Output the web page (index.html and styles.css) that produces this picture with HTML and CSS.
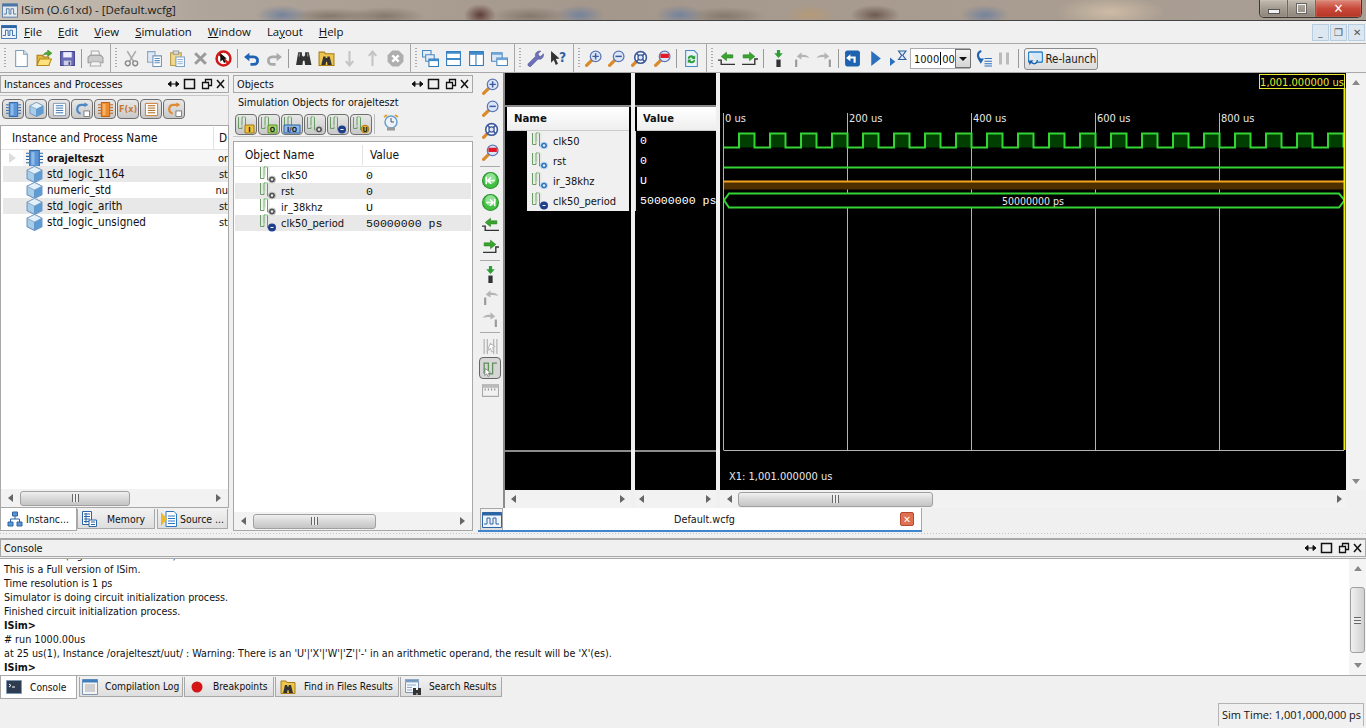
FILE: index.html
```html
<!DOCTYPE html>
<html lang="en">
  <head>
    <meta charset="UTF-8" />
    <title>ISim (O.61xd) - [Default.wcfg]</title>
    <link rel="stylesheet" href="styles.css">
  </head>
  <body>
    <svg class="defs" aria-hidden="true">
      <defs>
        <symbol id="i-new" viewBox="0 0 16 16"><path d="M2.500 .5h7.500l3.500 3.500v11.500h-11z" fill="#fff" stroke="#7b9ebd"/><path d="M10 .5v3.500h3.500" fill="#dbe8f3" stroke="#7b9ebd"/></symbol>
        <symbol id="i-open" viewBox="0 0 16 16"><path d="M1 5h5l1 1.500h5v8h-11z" fill="#e3b83a" stroke="#a97c14"/><path d="M1 14.500l2.500-6h11l-2.500 6z" fill="#fbe27e" stroke="#b58a1c"/><path d="M7 5c.5-2 2-3 4-3v-2l4 3-4 3v-2c-2 0-3 0-4 1z" fill="#4da82c" stroke="#2b7a14" stroke-width=".5"/></symbol>
        <symbol id="i-save" viewBox="0 0 16 16"><path d="M1.500 1.500h13v13h-13z" fill="#6a6db5" stroke="#44468a"/><path d="M4 2h8v5h-8z" fill="#eef"/><path d="M4.500 10h7v4.500h-7z" fill="#cfd0e8"/><path d="M9 11h1.500v3h-1.500z" fill="#44468a"/></symbol>
        <symbol id="i-print" viewBox="0 0 16 16"><path d="M4 1h7l1 4h-8z" fill="#f4f4f4" stroke="#aaa"/><path d="M1 7l2-2h10l2 2v5h-14z" fill="#ccc" stroke="#999"/><path d="M4 11h8l1 4h-10z" fill="#f4f4f4" stroke="#aaa"/></symbol>
        <symbol id="i-cut" viewBox="0 0 16 16"><path d="M4 1l6 10M12 1l-6 10" stroke="#aaa" stroke-width="1.500" fill="none"/><circle cx="4.500" cy="12.500" r="2.300" fill="none" stroke="#888" stroke-width="1.300"/><circle cx="11.500" cy="12.500" r="2.300" fill="none" stroke="#888" stroke-width="1.300"/></symbol>
        <symbol id="i-copy" viewBox="0 0 16 16"><path d="M1.500 1.500h7v10h-7z" fill="#dde8f4" stroke="#8aa6c4"/><path d="M6.500 5.500h8v10h-8z" fill="#fff" stroke="#6f93b8"/><path d="M8 8h5M8 10h5M8 12h5" stroke="#5f8fc0"/></symbol>
        <symbol id="i-paste" viewBox="0 0 16 16"><path d="M1.500 2.500h10v12h-10z" fill="#f0d98a" stroke="#b69a48"/><path d="M4 1h5v3h-5z" fill="#ddd" stroke="#999"/><path d="M6.500 6.500h8v9h-8z" fill="#fff" stroke="#7b9ebd"/><path d="M8 9h5M8 11h5M8 13h5" stroke="#8fb0d0"/></symbol>
        <symbol id="i-del" viewBox="0 0 16 16"><path d="M3 3l10 10M13 3l-10 10" stroke="#9a9a9a" stroke-width="2.800"/></symbol>
        <symbol id="i-noentry" viewBox="0 0 16 16"><circle cx="8" cy="8" r="6.500" fill="#fff" stroke="#d01818" stroke-width="2.400"/><path d="M3.500 3.500l9 9" stroke="#d01818" stroke-width="2"/><path d="M5 3l6 5-2.500.5 1.500 3-1.500.7-1.500-3-2 1.800z" fill="#111"/></symbol>
        <symbol id="i-undo" viewBox="0 0 16 16"><path d="M5 6.500h5c5 0 5 7 0 7h-3" fill="none" stroke="#1f63b5" stroke-width="2.600"/><path d="M1 6.500l5-4v8z" fill="#1f63b5"/></symbol>
        <symbol id="i-redo" viewBox="0 0 16 16"><path d="M11 6.500h-5c-5 0-5 7 0 7h3" fill="none" stroke="#aaa" stroke-width="2.600"/><path d="M15 6.500l-5-4v8z" fill="#aaa"/></symbol>
        <symbol id="i-binoc" viewBox="0 0 16 16"><path d="M3 2h3.500v3l1 1h1l1-1v-3h3.500l2.500 12h-6l-.5-4h-1.500l-.5 4h-6z" fill="#333"/><path d="M4 3v3M12 3v3" stroke="#999"/></symbol>
        <symbol id="i-findfolder" viewBox="0 0 16 16"><path d="M1 2h5l1 1.500h8v11h-14z" fill="#edc650" stroke="#a97c14"/><path d="M5 6h2.200v1.500h1.600v-1.500h2.200l2 8h-4l-.5-3h-.9l-.5 3h-4z" fill="#333"/></symbol>
        <symbol id="i-down" viewBox="0 0 16 16"><path d="M8 1v13M4.500 10.500l3.500 4 3.500-4" fill="none" stroke="#c4c4c4" stroke-width="2"/></symbol>
        <symbol id="i-up" viewBox="0 0 16 16"><path d="M8 15v-13M4.500 5.500l3.500-4 3.500 4" fill="none" stroke="#c4c4c4" stroke-width="2"/></symbol>
        <symbol id="i-stop" viewBox="0 0 16 16"><path d="M5 .5h6l4.500 4.500v6l-4.500 4.500h-6l-4.500-4.500v-6z" fill="#aeaeae"/><path d="M5 5l6 6M11 5l-6 6" stroke="#fff" stroke-width="2.200"/></symbol>
        <symbol id="i-casc" viewBox="0 0 16 16"><path d="M.5 .5h8v6h-8z" fill="#e4eef8" stroke="#4a88c0"/><path d="M3.500 4.500h8v6h-8z" fill="#e4eef8" stroke="#4a88c0"/><path d="M6.500 8.500h9v7h-9z" fill="#fff" stroke="#2f78ba"/><path d="M6.500 8.500h9v2h-9z" fill="#3f8acb"/></symbol>
        <symbol id="i-hsplit" viewBox="0 0 16 16"><path d="M1.500 1.500h13v13h-13z" fill="#fff" stroke="#2f78ba"/><path d="M1.500 1.500h13v2h-13zM1.500 7.500h13v2h-13z" fill="#3f8acb"/></symbol>
        <symbol id="i-vsplit" viewBox="0 0 16 16"><path d="M1.500 1.500h13v13h-13z" fill="#fff" stroke="#2f78ba"/><path d="M1.500 1.500h13v3h-13z" fill="#3f8acb"/><path d="M7.500 4v10" stroke="#2f78ba"/></symbol>
        <symbol id="i-wins" viewBox="0 0 16 16"><path d="M.5 2.500h10v8h-10z" fill="#d9e8f6" stroke="#4a88c0"/><path d="M.5 2.500h10v2h-10z" fill="#6ea5d6"/><path d="M5.500 7.500h10v7h-10z" fill="#fff" stroke="#4a88c0"/><path d="M5.500 7.500h10v2h-10z" fill="#6ea5d6"/></symbol>
        <symbol id="i-wrench" viewBox="0 0 16 16"><path d="M1 13l7-7c-.8-3 1.500-5.500 5-5l-2.500 2.500 .5 2 2 .5 2.500-2.500c.5 3.500-2 6-5 5l-7 7c-1 1-3.500-1-2.500-2.500z" fill="#6b70b8" stroke="#4a4e90" stroke-width=".5"/></symbol>
        <symbol id="i-help" viewBox="0 0 16 16"><path d="M1 1l8 7-3.500.5 2 4.500-2 1-2-4.500-2.500 2.500z" fill="#333"/><text x="8.500" y="11" class="svg-q">?</text></symbol>
        <symbol id="i-zin" viewBox="0 0 16 16"><path d="M1.500 14.500l5-5" stroke="#d98a2b" stroke-width="3" stroke-linecap="round"/><circle cx="10" cy="6" r="5" fill="#dbe6f8" stroke="#5d77b5" stroke-width="1.200"/><path d="M7 6h6M10 3v6" stroke="#3d5a9e" stroke-width="1.400"/></symbol>
        <symbol id="i-zout" viewBox="0 0 16 16"><path d="M1.500 14.500l5-5" stroke="#d98a2b" stroke-width="3" stroke-linecap="round"/><circle cx="10" cy="6" r="5" fill="#dbe6f8" stroke="#5d77b5" stroke-width="1.200"/><path d="M7 6h6" stroke="#3d5a9e" stroke-width="1.400"/></symbol>
        <symbol id="i-zfit" viewBox="0 0 16 16"><path d="M1.500 14.500l3-3" stroke="#d98a2b" stroke-width="3" stroke-linecap="round"/><circle cx="9" cy="7" r="5.500" fill="#fff" stroke="#3d5a9e" stroke-width="1.500"/><circle cx="9" cy="7" r="2.500" fill="#dbe6f8" stroke="#3d5a9e" stroke-width="1.200"/><path d="M5 3l2.500 2.500M13 3l-2.500 2.500M5 11l2.500-2.500M13 11l-2.500-2.500" stroke="#3d5a9e" stroke-width="1.500"/></symbol>
        <symbol id="i-zred" viewBox="0 0 16 16"><path d="M1.500 14.500l5-5" stroke="#d98a2b" stroke-width="3" stroke-linecap="round"/><circle cx="10" cy="6" r="5" fill="#dbe6f8" stroke="#5d77b5" stroke-width="1.200"/><path d="M6 3.500h8v4h-8z" fill="#e01828"/></symbol>
        <symbol id="i-refresh" viewBox="0 0 16 16"><path d="M2.500 .5h8l3 3v12h-11z" fill="#eaf3fb" stroke="#4a88c0"/><path d="M4.500 8c0-3 4-4 6-2l1-1v3.500h-3.500l1-1c-1-1-3-.5-3 1z" fill="#2f9d38"/><path d="M11.500 9.500c0 3-4 4-6 2l-1 1v-3.500h3.500l-1 1c1 1 3 .5 3-1z" fill="#2f9d38"/></symbol>
        <symbol id="i-gleft" viewBox="0 0 16 16"><circle cx="8" cy="8" r="7.500" fill="#43c043" stroke="#2c8f2c"/><circle cx="8" cy="6" r="5" fill="#8fe28f"/><path d="M12 8h-6M8.500 5l-3 3 3 3M4 4.500v7" fill="none" stroke="#fff" stroke-width="1.400"/></symbol>
        <symbol id="i-gright" viewBox="0 0 16 16"><circle cx="8" cy="8" r="7.500" fill="#43c043" stroke="#2c8f2c"/><circle cx="8" cy="6" r="5" fill="#8fe28f"/><path d="M4 8h6M7.500 5l3 3-3 3M12 4.500v7" fill="none" stroke="#fff" stroke-width="1.400"/></symbol>
        <symbol id="i-tleft" viewBox="0 0 16 16"><path d="M0 9.500h3v4h13" fill="none" stroke="#333" stroke-width="1.300"/><path d="M3 6l5-4v2.500h6v3h-6v2.500z" fill="#3aa52e" stroke="#1f7a1a" stroke-width=".5"/></symbol>
        <symbol id="i-tright" viewBox="0 0 16 16"><path d="M16 8.500h-3v5h-12" fill="none" stroke="#333" stroke-width="1.300"/><path d="M13 6l-5-4v2.500h-6v3h6v2.500z" fill="#3aa52e" stroke="#1f7a1a" stroke-width=".5"/></symbol>
        <symbol id="i-sdown" viewBox="0 0 16 16"><path d="M6.500 0h3v3h2.500l-4 4.500-4-4.500h2.500z" fill="#2f9d38"/><path d="M6 9h4v7h-4z" fill="#333"/></symbol>
        <symbol id="i-sback" viewBox="0 0 16 16"><path d="M2 9h2v7h-2z" fill="#999"/><path d="M3.500 6l4.500-4v2.500c3 0 6 .5 7.500 3-2-1-4-1-7.500-1v2.500z" fill="#b4b4b4"/></symbol>
        <symbol id="i-sfwd" viewBox="0 0 16 16"><path d="M12 9h2v7h-2z" fill="#999"/><path d="M12.500 6l-4.500-4v2.500c-3 0-6 .5-7.500 3 2-1 4-1 7.500-1v2.500z" fill="#b4b4b4"/></symbol>
        <symbol id="i-restart" viewBox="0 0 16 16"><path d="M1 2.500c0-1 1-2 2-2h10c1 0 2 1 2 2v11c0 1-1 2-2 2h-10c-1 0-2-1-2-2z" fill="#1d63b0"/><path d="M2 7.500l4-3.500v2h5v6h-2v-4h-3v2.500z" fill="#fff"/></symbol>
        <symbol id="i-play" viewBox="0 0 16 16"><path d="M4 1l9 7-9 7z" fill="#2a70bd"/></symbol>
        <symbol id="i-runfor" viewBox="0 0 16 16"><path d="M0 7l5 4-5 4z" fill="#2a70bd"/><path d="M8 1h7l-3 4 3 4h-7l3-4z" fill="#dfe9f5" stroke="#2a5f9e"/></symbol>
        <symbol id="i-wbreak" viewBox="0 0 16 16"><path d="M5 1c-4 1-4 6-1 8" fill="none" stroke="#1d63b0" stroke-width="2"/><path d="M1.500 8l6 0-3 5z" fill="#1d63b0"/><path d="M8 8h7M8 10.500h7M8 13h7M8 15h7" stroke="#2a70bd"/></symbol>
        <symbol id="i-pause" viewBox="0 0 16 16"><path d="M3 2h3v12h-3zM10 2h3v12h-3z" fill="#bbb"/></symbol>
        <symbol id="i-relaunch" viewBox="0 0 16 16"><path d="M2 1h12c1 0 1.500 .5 1.500 1.500v8c0 1-.5 1.500-1.500 1.500h-4" fill="#d5e8f8" stroke="#2f84c6" stroke-width="1.500"/><path d="M2 1c-1 0-1.500 .5-1.500 1.500v8c0 1 .5 1.500 1.500 1.500h3" fill="none" stroke="#2f84c6" stroke-width="1.500"/><path d="M10 9.500c0 4-3.500 5-6 3l-1.500-1" fill="none" stroke="#1d63b0" stroke-width="1.500"/><path d="M1 15v-5h5z" fill="#1d63b0" transform="rotate(-10 3 12)"/></symbol>

        <symbol id="i-chip" viewBox="0 0 16 16"><path d="M3.500 .5h9v15h-9z" fill="#5b95d6" stroke="#2c64a4"/><path d="M0 3h3M0 6h3M0 9h3M0 12h3M13 3h3M13 6h3M13 9h3M13 12h3" stroke="#2c64a4"/><path d="M5 2h3v12h-3z" fill="#8ebbe8"/></symbol>
        <symbol id="i-chipo" viewBox="0 0 16 16"><path d="M3.500 .5h9v15h-9z" fill="#ee8a2a" stroke="#b85d10"/><path d="M0 3h3M0 6h3M0 9h3M0 12h3M13 3h3M13 6h3M13 9h3M13 12h3" stroke="#b85d10"/><path d="M5 2h3v12h-3z" fill="#f8b36d"/></symbol>
        <symbol id="i-cube" viewBox="0 0 16 16"><path d="M8 .5l7 3.500v8l-7 3.500-7-3.500v-8z" fill="#a8cdeb" stroke="#6c93ba"/><path d="M1 4l7 3.500 7-3.500-7-3.500z" fill="#e4f1fb" stroke="#6c93ba" stroke-width=".6"/><path d="M8 7.500v8" stroke="#6c93ba"/><path d="M8 7.500l7-3.500v8l-7 3.500z" fill="#5e9dd3"/></symbol>
        <symbol id="i-list" viewBox="0 0 16 16"><path d="M1.500 1.500h13v13h-13z" fill="#fff" stroke="#7f98b2"/><path d="M4 4h8M4 6.500h8M4 9h8M4 11.500h8" stroke="#2c6fb0"/></symbol>
        <symbol id="i-listo" viewBox="0 0 16 16"><path d="M1.500 1.500h13v13h-13z" fill="#fff" stroke="#c97a2a"/><path d="M4 4h8M4 6.500h8M4 9h8M4 11.500h8" stroke="#a85f10"/></symbol>
        <symbol id="i-loop" viewBox="0 0 16 16"><path d="M13 3h-6c-6 0-6 9-1 9" fill="none" stroke="#4d88c4" stroke-width="2.400"/><path d="M10 .5l4 2.500-4 2.500z" fill="#4d88c4"/><path d="M9.500 9.500h6v6h-6z" fill="#fff" stroke="#777"/></symbol>
        <symbol id="i-loopo" viewBox="0 0 16 16"><path d="M13 3h-6c-6 0-6 9-1 9" fill="none" stroke="#e08a35" stroke-width="2.400"/><path d="M10 .5l4 2.500-4 2.500z" fill="#e08a35"/><path d="M9.500 9.500h6v6h-6z" fill="#fff" stroke="#777"/></symbol>

        <symbol id="i-sig" viewBox="0 0 18 18"><path d="M1.500 1v11.500h3.500v-11.500h3.500v13h3" fill="none" stroke="#6c9c66" stroke-width="1"/><path d="M3 1v9h3.500v-9h3.500v11" fill="none" stroke="#d6e8d2" stroke-width=".8"/></symbol>
        <symbol id="i-sigdot" viewBox="0 0 18 18"><use href="#i-sig"/><circle cx="13" cy="13.500" r="3.500" fill="#555" stroke="#ccc"/><circle cx="13" cy="13.500" r="1.200" fill="#eee"/></symbol>
        <symbol id="i-sigblue" viewBox="0 0 18 18"><use href="#i-sig"/><circle cx="13" cy="13.500" r="3.500" fill="#2f79c0" stroke="#cfe0f2"/><circle cx="13" cy="13.500" r="1.200" fill="#eef"/></symbol>
        <symbol id="i-sigconst" viewBox="0 0 18 18"><use href="#i-sig"/><circle cx="13" cy="13.500" r="4" fill="#1e3f8e"/><path d="M11.500 13.500h3" stroke="#fff"/></symbol>
        <symbol id="i-sigi" viewBox="0 0 18 18"><use href="#i-sig"/><path d="M8 9h9v8h-9z" fill="#f2c13e" stroke="#a07b12"/><text x="12.500" y="16" class="svg-badge">I</text></symbol>
        <symbol id="i-sigo" viewBox="0 0 18 18"><use href="#i-sig"/><path d="M8 9h9v8h-9z" fill="#a5d56a" stroke="#5e9428"/><text x="12.500" y="16" class="svg-badge">O</text></symbol>
        <symbol id="i-sigio" viewBox="0 0 18 18"><use href="#i-sig"/><path d="M1 9h16v8h-16z" fill="#8fbbe5" stroke="#2c64a4"/><text x="9" y="16" class="svg-badge">I/O</text></symbol>
        <symbol id="i-sigy" viewBox="0 0 18 18"><use href="#i-sig"/><circle cx="13" cy="13" r="3.800" fill="#e8a92c" stroke="#b07c10"/><text x="13" y="15.500" class="svg-badge">U</text></symbol>
        <symbol id="i-clock" viewBox="0 0 18 18"><circle cx="9" cy="8" r="6" fill="#eaf3fb" stroke="#6fa0cc" stroke-width="1.500"/><path d="M9 4v4h3" fill="none" stroke="#555"/><path d="M2 3l3-2M16 3l-3-2" stroke="#e0a030" stroke-width="2"/><path d="M5 15h8" stroke="#999" stroke-width="3"/></symbol>

        <symbol id="i-tree" viewBox="0 0 16 16"><path d="M5.500 1h5v4h-5z" fill="#5b95d6" stroke="#2c64a4"/><path d="M1 11h5v4h-5zM10 11h5v4h-5z" fill="#5b95d6" stroke="#2c64a4"/><path d="M8 5v3M3.500 11v-3h9v3" fill="none" stroke="#2c64a4"/></symbol>
        <symbol id="i-mem" viewBox="0 0 16 16"><path d="M1.500 .5h9v13h-9z" fill="#fff" stroke="#2c64a4"/><path d="M3 3h6M3 5.500h6M3 8h6M3 10.500h6M5 2v10" stroke="#2c64a4"/><path d="M8 9h7.500v6.500h-7.500z" fill="#fff" stroke="#2c64a4"/><path d="M10 11h4M10 13.500h4" stroke="#2c64a4"/></symbol>
        <symbol id="i-src" viewBox="0 0 16 16"><path d="M5 .5h8l2.500 2.500v12.500h-10.500z" fill="#fff" stroke="#2c78c0"/><path d="M7 5h7M7 7.500h7M7 10h7M7 12.500h7" stroke="#2c78c0"/><path d="M0 1l6 7-6 7z" fill="#f0b828"/></symbol>
        <symbol id="i-wave" viewBox="0 0 20 16"><path d="M.5 .5h19v15h-19z" fill="#eef4fb" stroke="#2c64a4"/><path d="M.5 .5h19v3h-19z" fill="#2c64a4"/><path d="M2 12h3v-6h3v6h3v-6h3v6h3" fill="none" stroke="#2c64a4"/></symbol>
        <symbol id="i-console" viewBox="0 0 16 16"><path d="M.5 1.500h15v13h-15z" fill="#2e3c52" stroke="#7f98b2"/><path d="M3 5l2 1.500-2 1.500M6 8h3" fill="none" stroke="#fff"/></symbol>
        <symbol id="i-log" viewBox="0 0 16 16"><path d="M.5 .5h15v15h-15z" fill="#f4f4f4" stroke="#7f98b2"/><path d="M.5 .5h15v3h-15z" fill="#3f7fbe"/><path d="M3 6h10M3 8h10M3 10h10M3 12h10" stroke="#aaa"/></symbol>
        <symbol id="i-redball" viewBox="0 0 16 16"><circle cx="8" cy="8" r="5.500" fill="#d51515"/></symbol>
        <symbol id="i-results" viewBox="0 0 16 16"><path d="M.5 .5h13v13h-13z" fill="#f4f7fb" stroke="#7f98b2"/><path d="M.5 .5h13v2.500h-13zM2 6h9M2 8.500h5M2 11h5" fill="#6f97c0" stroke="#8fa9c4"/><path d="M8 9h3v2h2v-2h3v7h-3.500v-2h-1v2h-3.500z" fill="#333"/></symbol>
        <symbol id="i-app" viewBox="0 0 18 16"><path d="M.5 .5h17v15h-17z" fill="#eef4fb" stroke="#2c64a4"/><path d="M.5 .5h17v3h-17z" fill="#2c64a4"/><path d="M2 12h3v-6h3v6h2v-6h3v6h3" fill="none" stroke="#2c64a4"/></symbol>
        <symbol id="i-pin" viewBox="0 0 58 12"><path d="M1 6h11M1 6l3-2.500v5zM12 6l-3-2.500v5z" fill="#111" stroke="#111"/><path d="M17.500 1.500h10v9h-10z" fill="none" stroke="#111" stroke-width="1.500"/><path d="M35.500 4.500h6v6h-6zM38.500 4.500v-3h6v6h-3" fill="none" stroke="#111" stroke-width="1.300"/><path d="M50 2l7 8M57 2l-7 8" stroke="#111" stroke-width="1.500"/></symbol>
      </defs>
    </svg>

    <div class="app">
      <header class="titlebar">
        <svg class="title-icon"><use href="#i-app"/></svg>
        <span class="title-text">ISim (O.61xd) - [Default.wcfg]</span>
        <div class="winbtns">
          <div class="winbtn winbtn-min"><span class="min-bar"></span></div>
          <div class="winbtn winbtn-max"><span class="max-box"></span></div>
          <div class="winbtn winbtn-close">✕</div>
        </div>
      </header>

      <nav class="menubar">
        <svg class="menu-icon"><use href="#i-app"/></svg>
        <span class="menu-item m-file"><u>F</u>ile</span>
        <span class="menu-item"><u>E</u>dit</span>
        <span class="menu-item"><u>V</u>iew</span>
        <span class="menu-item"><u>S</u>imulation</span>
        <span class="menu-item"><u>W</u>indow</span>
        <span class="menu-item">La<u>y</u>out</span>
        <span class="menu-item"><u>H</u>elp</span>
        <div class="docbtns">
          <span class="docbtn">_</span>
          <span class="docbtn">❐</span>
          <span class="docbtn">✕</span>
        </div>
      </nav>

      <div class="toolbar">
        <div class="tgroup tgroup-first">
          <span class="tb"><svg><use href="#i-new"/></svg></span>
          <span class="tb"><svg><use href="#i-open"/></svg></span>
          <span class="tb"><svg><use href="#i-save"/></svg></span>
          <span class="tsep"></span>
          <span class="tb"><svg><use href="#i-print"/></svg></span>
        </div>
        <div class="tgroup">
          <span class="tb"><svg><use href="#i-cut"/></svg></span>
          <span class="tb"><svg><use href="#i-copy"/></svg></span>
          <span class="tb"><svg><use href="#i-paste"/></svg></span>
          <span class="tb"><svg><use href="#i-del"/></svg></span>
          <span class="tb"><svg><use href="#i-noentry"/></svg></span>
          <span class="tsep"></span>
          <span class="tb"><svg><use href="#i-undo"/></svg></span>
          <span class="tb"><svg><use href="#i-redo"/></svg></span>
          <span class="tsep"></span>
          <span class="tb"><svg><use href="#i-binoc"/></svg></span>
          <span class="tb"><svg><use href="#i-findfolder"/></svg></span>
          <span class="tb"><svg><use href="#i-down"/></svg></span>
          <span class="tb"><svg><use href="#i-up"/></svg></span>
          <span class="tb"><svg><use href="#i-stop"/></svg></span>
        </div>
        <div class="tgroup">
          <span class="tb"><svg><use href="#i-casc"/></svg></span>
          <span class="tb"><svg><use href="#i-hsplit"/></svg></span>
          <span class="tb"><svg><use href="#i-vsplit"/></svg></span>
          <span class="tb"><svg><use href="#i-wins"/></svg></span>
        </div>
        <div class="tgroup">
          <span class="tb"><svg><use href="#i-wrench"/></svg></span>
          <span class="tb"><svg><use href="#i-help"/></svg></span>
        </div>
        <div class="tgroup">
          <span class="tb"><svg><use href="#i-zin"/></svg></span>
          <span class="tb"><svg><use href="#i-zout"/></svg></span>
          <span class="tb"><svg><use href="#i-zfit"/></svg></span>
          <span class="tb"><svg><use href="#i-zred"/></svg></span>
          <span class="tsep"></span>
          <span class="tb"><svg><use href="#i-refresh"/></svg></span>
        </div>
        <div class="tgroup tgroup-last">
          <span class="tb"><svg><use href="#i-tleft"/></svg></span>
          <span class="tb"><svg><use href="#i-tright"/></svg></span>
          <span class="tsep"></span>
          <span class="tb"><svg><use href="#i-sdown"/></svg></span>
          <span class="tb"><svg><use href="#i-sback"/></svg></span>
          <span class="tb"><svg><use href="#i-sfwd"/></svg></span>
          <span class="tsep"></span>
          <span class="tb"><svg><use href="#i-restart"/></svg></span>
          <span class="tb"><svg><use href="#i-play"/></svg></span>
          <span class="tb"><svg><use href="#i-runfor"/></svg></span>
          <div class="timebox">
            <span class="timebox-text">1000<span class="caret"></span>00</span>
            <span class="timebox-drop"></span>
          </div>
          <span class="tb"><svg><use href="#i-wbreak"/></svg></span>
          <span class="tb tb-narrow"><svg><use href="#i-pause"/></svg></span>
          <span class="tsep"></span>
          <div class="relaunch"><svg><use href="#i-relaunch"/></svg>Re-launch</div>
        </div>
      </div>

      <main class="main">
        <section class="leftpane">
          <div class="panel-head">Instances and Processes<svg class="pin"><use href="#i-pin"/></svg></div>
          <div class="icon-strip">
            <span class="toggle"><svg><use href="#i-chip"/></svg></span>
            <span class="toggle"><svg><use href="#i-cube"/></svg></span>
            <span class="toggle"><svg><use href="#i-list"/></svg></span>
            <span class="toggle"><svg><use href="#i-loop"/></svg></span>
            <span class="toggle"><svg><use href="#i-chipo"/></svg></span>
            <span class="toggle toggle-fx">F(x)</span>
            <span class="toggle"><svg><use href="#i-listo"/></svg></span>
            <span class="toggle"><svg><use href="#i-loopo"/></svg></span>
          </div>
          <div class="tree-box">
            <div class="tree-head"><span class="tree-head-name">Instance and Process Name</span><span class="tree-head-d">D</span></div>
            <div class="tree-body">
              <div class="tree-row tree-top"><span class="expander"></span><svg><use href="#i-chip"/></svg><span class="tree-name bold">orajelteszt</span><span class="tree-d">or</span></div>
              <div class="tree-row shade"><svg><use href="#i-cube"/></svg><span class="tree-name">std_logic_1164</span><span class="tree-d">st</span></div>
              <div class="tree-row"><svg><use href="#i-cube"/></svg><span class="tree-name">numeric_std</span><span class="tree-d">nu</span></div>
              <div class="tree-row shade"><svg><use href="#i-cube"/></svg><span class="tree-name">std_logic_arith</span><span class="tree-d">st</span></div>
              <div class="tree-row"><svg><use href="#i-cube"/></svg><span class="tree-name">std_logic_unsigned</span><span class="tree-d">st</span></div>
            </div>
            <div class="hscroll">
              <span class="arrow arrow-l"></span>
              <span class="thumb thumb-left"><i class="grip"></i></span>
              <span class="arrow arrow-r"></span>
            </div>
          </div>
          <div class="tabs tabs-left">
            <span class="tab tab-active tab-inst"><svg><use href="#i-tree"/></svg>Instanc...</span>
            <span class="tab tab-mem"><svg><use href="#i-mem"/></svg>Memory</span>
            <span class="tab tab-src"><svg><use href="#i-src"/></svg>Source ...</span>
          </div>
        </section>

        <section class="objpane">
          <div class="panel-head">Objects<svg class="pin"><use href="#i-pin"/></svg></div>
          <div class="obj-title">Simulation Objects for orajelteszt</div>
          <div class="icon-strip icon-strip-obj">
            <span class="toggle"><svg><use href="#i-sigi"/></svg></span>
            <span class="toggle"><svg><use href="#i-sigo"/></svg></span>
            <span class="toggle"><svg><use href="#i-sigio"/></svg></span>
            <span class="toggle"><svg><use href="#i-sigdot"/></svg></span>
            <span class="toggle"><svg><use href="#i-sigconst"/></svg></span>
            <span class="toggle"><svg><use href="#i-sigy"/></svg></span>
            <span class="strip-sep"></span>
            <svg class="strip-clock"><use href="#i-clock"/></svg>
          </div>
          <div class="obj-box">
            <div class="obj-head"><span class="obj-col-name">Object Name</span><span class="obj-col-val">Value</span></div>
            <div class="obj-body">
              <div class="obj-row"><svg><use href="#i-sigdot"/></svg><span class="obj-name">clk50</span><span class="obj-val">0</span></div>
              <div class="obj-row shade"><svg><use href="#i-sigdot"/></svg><span class="obj-name">rst</span><span class="obj-val">0</span></div>
              <div class="obj-row"><svg><use href="#i-sigdot"/></svg><span class="obj-name">ir_38khz</span><span class="obj-val">U</span></div>
              <div class="obj-row shade"><svg><use href="#i-sigconst"/></svg><span class="obj-name">clk50_period</span><span class="obj-val">50000000 ps</span></div>
            </div>
            <div class="hscroll">
              <span class="arrow arrow-l"></span>
              <span class="thumb thumb-obj"><i class="grip"></i></span>
              <span class="arrow arrow-r"></span>
            </div>
          </div>
        </section>

        <section class="rightpane">
          <div class="right-top">
            <div class="sidebar">
              <span class="sb"><svg><use href="#i-zin"/></svg></span>
              <span class="sb"><svg><use href="#i-zout"/></svg></span>
              <span class="sb"><svg><use href="#i-zfit"/></svg></span>
              <span class="sb"><svg><use href="#i-zred"/></svg></span>
              <span class="ssep"></span>
              <span class="sb"><svg><use href="#i-gleft"/></svg></span>
              <span class="sb"><svg><use href="#i-gright"/></svg></span>
              <span class="sb"><svg><use href="#i-tleft"/></svg></span>
              <span class="sb"><svg><use href="#i-tright"/></svg></span>
              <span class="ssep"></span>
              <span class="sb"><svg><use href="#i-sdown"/></svg></span>
              <span class="sb"><svg><use href="#i-sback"/></svg></span>
              <span class="sb"><svg><use href="#i-sfwd"/></svg></span>
              <span class="ssep"></span>
              <span class="sb sb-dim"><svg viewBox="0 0 16 16"><path d="M2 1v14M14 1v14M5 1v14M11 1v14" stroke="#aaa"/><path d="M8 5l4 3-2 1 1 3-2 1-1-3-3 2z" fill="#fff" stroke="#bbb"/></svg></span>
              <span class="sb sb-on"><svg viewBox="0 0 16 16"><path d="M2 13v-10h4v10h4v-10h4" fill="none" stroke="#5f8f5a" stroke-width="1.200"/><path d="M3 8l5 4-2 .5 1 2.500-1.500 .5-1-2.500-2 1.500z" fill="#fff" stroke="#666" stroke-width=".6"/></svg></span>
              <span class="sb"><svg viewBox="0 0 16 16"><path d="M.5 2.500h15v11h-15z" fill="#f2f2f2" stroke="#aaa"/><path d="M.5 2.500h15v3h-15z" fill="#bbb"/><path d="M3 6v2M6 6v2M9 6v2M12 6v2" stroke="#888"/></svg></span>
            </div>

            <div class="wavepane">
              <div class="wavecols">
                <div class="col col-names">
                  <div class="col-top"></div>
                  <div class="col-head">Name</div>
                  <div class="name-row"><svg><use href="#i-sigblue"/></svg>clk50</div>
                  <div class="name-row"><svg><use href="#i-sigblue"/></svg>rst</div>
                  <div class="name-row"><svg><use href="#i-sigblue"/></svg>ir_38khz</div>
                  <div class="name-row"><svg><use href="#i-sigconst"/></svg>clk50_period</div>
                  <div class="col-fill"></div>
                  <div class="col-foot"></div>
                </div>
                <div class="col col-values">
                  <div class="col-top"></div>
                  <div class="col-head">Value</div>
                  <div class="val-rows">
                    <div class="val-row">0</div>
                    <div class="val-row">0</div>
                    <div class="val-row">U</div>
                    <div class="val-row">50000000 ps</div>
                  </div>
                  <div class="col-fill"></div>
                  <div class="col-foot"></div>
                </div>
                <svg class="wave" viewBox="720 73 626 417">
                  <defs>
                    <g id="ticks62"><path d="M12.400 127v3M24.800 127v3M37.200 127v3M49.600 127v3M62 122v8"/></g>
                  </defs>
                  <g class="grid">
                    <path d="M723.500 113v337M847.500 113v337M971.500 113v337M1095.500 113v337M1219.500 113v337M723.500 450.500H1344"/>
                  </g>
                  <g class="ticks">
                    <use href="#ticks62" x="723.500"/><use href="#ticks62" x="785.500"/><use href="#ticks62" x="847.500"/><use href="#ticks62" x="909.500"/><use href="#ticks62" x="971.500"/><use href="#ticks62" x="1033.500"/><use href="#ticks62" x="1095.500"/><use href="#ticks62" x="1157.500"/><use href="#ticks62" x="1219.500"/><use href="#ticks62" x="1281.500"/>
                  </g>
                  <g class="axis-text">
                    <text x="725" y="122">0 us</text><text x="849" y="122">200 us</text><text x="973" y="122">400 us</text><text x="1097" y="122">600 us</text><text x="1221" y="122">800 us</text>
                  </g>
                  <path class="clk" d="M724 147.500h15V133.500h15.500V147.500h15.500V133.500h15.500V147.500h15.500V133.500h15.500V147.500h15.500V133.500h15.500V147.500h15.500V133.500h15.500V147.500h15.500V133.500h15.500V147.500h15.500V133.500h15.500V147.500h15.500V133.500h15.500V147.500h15.500V133.500h15.500V147.500h15.500V133.500h15.500V147.500h15.500V133.500h15.500V147.500h15.500V133.500h15.500V147.500h15.500V133.500h15.500V147.500h15.500V133.500h15.500V147.500h15.500V133.500h15.500V147.500h15.500V133.500h15.500V147.500h15.500V133.500h15.500V147.500h15.500V133.500h15.500V147.500h15.500V133.500h15.500V147.500h15.500V133.500h15.500V147.500"/>
                  <path class="lvl-green" d="M724 167.500H1344"/>
                  <rect class="lvl-brown" x="724" y="182" width="620" height="7.500"/>
                  <path class="lvl-orange" d="M724 181.500H1344"/>
                  <path class="bus" d="M729 193.500H1339L1344 199.500V201L1339 207.500H729L724.500 201V199.500Z"/>
                  <text class="bus-text" x="1033" y="204.500">50000000 ps</text>
                  <path class="cursor" d="M1344.500 88V450"/>
                  <rect class="cursor-box" x="1259.500" y="74.500" width="85" height="14"/>
                  <text class="cursor-text" x="1302" y="85.500">1,001.000000 us</text>
                  <text class="x1-text" x="729" y="480">X1: 1,001.000000 us</text>
                </svg>
                <div class="vscroll-thin">
                  <span class="arrow arrow-u"></span>
                  <span class="arrow arrow-d"></span>
                </div>
              </div>
              <div class="wavescrolls">
                <div class="hscroll hs-names"><span class="arrow arrow-l"></span><span class="arrow arrow-r"></span></div>
                <div class="hscroll hs-values"><span class="arrow arrow-l"></span><span class="arrow arrow-r"></span></div>
                <div class="hscroll hs-wave">
                  <span class="arrow arrow-l"></span>
                  <span class="thumb thumb-wave"><i class="grip"></i></span>
                  <span class="arrow arrow-r"></span>
                </div>
              </div>
            </div>
          </div>
          <div class="wave-tabs">
            <span class="wave-tab-icon"><svg><use href="#i-wave"/></svg></span>
            <span class="wave-tab"><span class="wave-tab-text">Default.wcfg</span><span class="tab-close">✕</span></span>
          </div>
          <div class="tab-blue"></div>
        </section>
      </main>

      <div class="sash"></div>

      <section class="console">
        <div class="panel-head console-head">Console<svg class="pin"><use href="#i-pin"/></svg></div>
        <div class="console-box">
          <div class="console-text">
            <div class="clog clog-cut">ISim O.61xd (signature 0x8ddf5b5f)</div>
            <div class="clog">This is a Full version of ISim.</div>
            <div class="clog">Time resolution is 1 ps</div>
            <div class="clog">Simulator is doing circuit initialization process.</div>
            <div class="clog">Finished circuit initialization process.</div>
            <div class="clog bold">ISim&gt;</div>
            <div class="clog"># run 1000.00us</div>
            <div class="clog">at 25 us(1), Instance /orajelteszt/uut/ : Warning: There is an 'U'|'X'|'W'|'Z'|'-' in an arithmetic operand, the result will be 'X'(es).</div>
            <div class="clog bold">ISim&gt;</div>
          </div>
          <div class="vscroll">
            <span class="arrow arrow-u"></span>
            <span class="vthumb"><i class="vgrip"></i></span>
            <span class="arrow arrow-d"></span>
          </div>
        </div>
      </section>

      <div class="tabs tabs-bottom">
        <span class="tab tab-active tab-con"><svg><use href="#i-console"/></svg>Console</span>
        <span class="tab tab-log"><svg><use href="#i-log"/></svg>Compilation Log</span>
        <span class="tab tab-brk"><svg><use href="#i-redball"/></svg>Breakpoints</span>
        <span class="tab tab-find"><svg><use href="#i-findfolder"/></svg>Find in Files Results</span>
        <span class="tab tab-search"><svg><use href="#i-results"/></svg>Search Results</span>
      </div>

      <footer class="statusbar">
        <span class="simtime">Sim Time: 1,001,000,000 ps</span>
      </footer>
    </div>
  </body>
</html>
```

FILE: styles.css
```css
* {
  box-sizing: border-box;
}

body {
  margin: 0;
  background: #f0f0f0;
  color: #111;
  font-family: "DejaVu Sans Condensed", "Liberation Sans", sans-serif;
  font-size: 10.700px;
  overflow: hidden;
}

.defs {
  position: absolute;
  width: 0;
  height: 0;
}

svg text {
  font-family: "DejaVu Sans Condensed", "Liberation Sans", sans-serif;
}

.svg-q {
  font-size: 13px;
  font-weight: bold;
  fill: #2c64a4;
}

.svg-badge {
  font-size: 7px;
  font-weight: bold;
  text-anchor: middle;
  fill: #222;
}

.app {
  width: 1366px;
  height: 728px;
  display: flex;
  flex-direction: column;
}

.bold {
  font-weight: bold;
}

/* title bar */
.titlebar {
  height: 21px;
  flex: none;
  display: flex;
  align-items: flex-start;
  padding-left: 2px;
  border-bottom: 1px solid #444;
  background:
    radial-gradient(ellipse 26px 10px at 282px 15px, #75839c, transparent),
    radial-gradient(ellipse 45px 8px at 330px 16px, #85796e, transparent),
    radial-gradient(ellipse 40px 9px at 385px 16px, #85796e, transparent),
    radial-gradient(ellipse 16px 11px at 480px 15px, #5e3c36, transparent),
    radial-gradient(ellipse 40px 9px at 530px 16px, #85796e, transparent),
    radial-gradient(ellipse 24px 10px at 580px 15px, #75839c, transparent),
    radial-gradient(ellipse 24px 10px at 680px 15px, #75839c, transparent),
    radial-gradient(ellipse 40px 9px at 725px 16px, #85796e, transparent),
    radial-gradient(ellipse 25px 10px at 810px 15px, #b59a78, transparent),
    radial-gradient(ellipse 25px 10px at 875px 15px, #6e5a50, transparent),
    radial-gradient(ellipse 24px 10px at 985px 15px, #75839c, transparent),
    radial-gradient(ellipse 55px 16px at 1110px 12px, #cdbba5, transparent),
    linear-gradient(90deg, #cbc3b8 0, #b0a59a 200px, #a4978b 600px, #a99c90 1000px, #a89e94 100%);
}

.title-icon {
  width: 16px;
  height: 15px;
  margin-top: 3px;
  opacity: .8;
}

.title-text {
  margin: 2px 0 0 3px;
  font-family: "Open Sans", sans-serif;
  font-size: 11.500px;
  line-height: 16px;
  color: #1a1a1a;
}

.winbtns {
  margin-left: auto;
  margin-right: 4px;
  display: flex;
  height: 18px;
  border: 1px solid #3b3733;
  border-top: none;
  border-radius: 0 0 5px 5px;
  overflow: hidden;
}

.winbtn {
  display: flex;
  align-items: center;
  justify-content: center;
  border-left: 1px solid #6d675f;
  background: linear-gradient(#c3bbb0, #a49b90 50%, #8d857b);
  box-shadow: inset 0 0 1px #eee;
}

.winbtn-min {
  width: 27px;
  border-left: none;
}

.winbtn-max {
  width: 28px;
}

.winbtn-close {
  width: 46px;
  color: #fff;
  font-size: 13px;
  font-weight: bold;
  background: linear-gradient(#dc8a7a, #c8493a 50%, #b53525);
}

.min-bar {
  width: 12px;
  height: 5px;
  margin-top: 5px;
  background: #f2f2f2;
  border: 1px solid #555;
}

.max-box {
  width: 11px;
  height: 11px;
  border: 2px solid #f0f0f0;
  outline: 1px solid #666;
  outline-offset: -1px;
}

/* menu */
.menubar {
  height: 23px;
  flex: none;
  display: flex;
  align-items: center;
  gap: 16px;
  font-family: "Open Sans", sans-serif;
  font-size: 11.400px;
  border-bottom: 1px solid #a8a8a8;
}

.menu-icon {
  width: 16px;
  height: 14px;
  margin-left: 1px;
  margin-right: -9px;
}

.menu-item {
  line-height: 16px;
}

.docbtns {
  margin-left: auto;
  margin-right: 1px;
  display: flex;
  gap: 1px;
}

.docbtn {
  width: 17px;
  height: 17px;
  display: flex;
  align-items: center;
  justify-content: center;
  color: #555;
  font-size: 10px;
  line-height: 1;
  background: #dce7f1;
  border: 1px solid #b8cde0;
}

/* main toolbar */
.toolbar {
  height: 29px;
  flex: none;
  display: flex;
  align-items: stretch;
  border-bottom: 1px solid #a8a8a8;
}

.tgroup {
  position: relative;
  display: flex;
  align-items: center;
  padding: 1px 3px 0 8.500px;
  border-right: 1px solid #a8a8a8;
}

.tgroup::before {
  content: "";
  position: absolute;
  left: 4px;
  top: 4px;
  bottom: 4px;
  width: 2px;
  background: repeating-linear-gradient(#aaa 0 1px, transparent 1px 3px);
}

.tgroup-first {
  padding-left: 9.500px;
}

.tgroup-last {
  border-right: none;
}

.tb {
  width: 23px;
  height: 24px;
  flex: none;
  display: flex;
  align-items: center;
  justify-content: center;
}

.tb svg {
  width: 17px;
  height: 17px;
}

.tb-narrow {
  width: 16px;
  margin-right: 4px;
}

.tsep {
  width: 5.500px;
  height: 19px;
  flex: none;
  background: linear-gradient(#999, #999) center / 1px 100% no-repeat;
}

.timebox {
  width: 60px;
  height: 21px;
  margin: 0 3px 0 0;
  flex: none;
  display: flex;
  align-items: center;
  background: #fff;
  border: 1px solid #abadb3;
}

.timebox-text {
  flex: 1;
  padding-left: 3px;
  font-size: 11px;
  white-space: nowrap;
}

.caret {
  display: inline-block;
  width: 1px;
  height: 13px;
  margin: 0 1px;
  vertical-align: -2px;
  background: #000;
}

.timebox-drop {
  width: 16px;
  height: 19px;
  flex: none;
  position: relative;
  background: linear-gradient(#f2f2f2, #d4d4d4);
  border: 1px solid #707070;
}

.timebox-drop::after {
  content: "";
  position: absolute;
  left: 3px;
  top: 7px;
  border: 4px solid transparent;
  border-top-color: #111;
}

.relaunch {
  width: 74px;
  height: 22px;
  margin-left: 2px;
  flex: none;
  display: flex;
  align-items: center;
  gap: 3px;
  padding-left: 3px;
  font-size: 11.400px;
  color: #222;
  background: linear-gradient(#f4f4f4, #dcdcdc);
  border: 1px solid #8a8a8a;
  border-radius: 3px;
}

.relaunch svg {
  width: 15px;
  height: 15px;
}

/* main row */
.main {
  height: 459px;
  flex: none;
  display: flex;
}

.leftpane {
  width: 229px;
  flex: none;
  display: flex;
  flex-direction: column;
  padding-top: 2px;
}

.panel-head {
  height: 18px;
  flex: none;
  display: flex;
  align-items: center;
  justify-content: space-between;
  padding: 0 3px;
  font-size: 10.800px;
  background: #f0f0f0;
  border: 1px solid #a8a8a8;
}

.pin {
  width: 58px;
  height: 12px;
  flex: none;
}

.icon-strip {
  height: 30px;
  margin-top: 2px;
  flex: none;
  display: flex;
  align-items: flex-start;
  gap: 1px;
  padding: 3px 0 0 2px;
  border-top: 1px solid #c8c8c8;
  border-right: 1px solid #c8c8c8;
}

.toggle {
  width: 22px;
  height: 20px;
  flex: none;
  display: flex;
  align-items: center;
  justify-content: center;
  background: linear-gradient(#e8e8e8, #c8c8c8);
  border: 1px solid #6f6f6f;
  border-radius: 4px;
}

.toggle svg {
  width: 15px;
  height: 15px;
}

.toggle-fx {
  font-size: 9px;
  font-weight: bold;
  color: #c87a30;
}

.tree-box {
  flex: 1;
  min-height: 0;
  display: flex;
  flex-direction: column;
  background: #fff;
  border: 1px solid #a8a8a8;
}

.tree-head {
  height: 24px;
  flex: none;
  display: flex;
  align-items: center;
  font-size: 11.700px;
  border-bottom: 1px solid #e2e2e2;
  background: #fff;
}

.tree-head-name {
  width: 213px;
  padding-left: 11px;
  border-right: 1px solid #e2e2e2;
  line-height: 22px;
}

.tree-head-d {
  padding-left: 5px;
}

.tree-body {
  flex: 1;
  overflow: hidden;
  font-size: 11.600px;
}

.tree-row {
  height: 16px;
  position: relative;
  display: flex;
  align-items: center;
  padding-left: 23px;
  margin-left: 2px;
}

.tree-row svg {
  width: 17px;
  height: 17px;
  flex: none;
}

.tree-name {
  margin-left: 4px;
  width: 172px;
}

.tree-name.bold {
  font-size: 10.500px;
}

.tree-d {
  white-space: nowrap;
  font-size: 11px;
}

.tree-top {
  background: linear-gradient(90deg, transparent 20px, #f6f6f6 20px);
}

.shade {
  background: #e8e8e8;
}

.expander {
  position: absolute;
  left: 6px;
  top: 3px;
  border-left: 7px solid #ddd;
  border-top: 5px solid transparent;
  border-bottom: 5px solid transparent;
}

.hscroll {
  height: 18px;
  flex: none;
  display: flex;
  align-items: center;
  justify-content: space-between;
  padding: 0 7px;
  background: #f2f2f2;
}

.arrow {
  width: 0;
  height: 0;
  flex: none;
  border: 4px solid transparent;
}

.arrow-l {
  border-left: none;
  border-right: 5px solid #666;
}

.arrow-r {
  border-right: none;
  border-left: 5px solid #666;
}

.arrow-u {
  border-top: none;
  border-bottom: 5px solid #888;
}

.arrow-d {
  border-bottom: none;
  border-top: 5px solid #888;
}

.thumb {
  height: 15px;
  display: flex;
  align-items: center;
  justify-content: center;
  background: linear-gradient(#f0f0f0, #d8d8d8 50%, #c4c4c4);
  border: 1px solid #a0a0a0;
  border-radius: 3px;
}

.grip {
  width: 7px;
  height: 8px;
  background: repeating-linear-gradient(90deg, #666 0 1px, #eee 1px 3px);
}

.thumb-left {
  width: 110px;
  margin-right: auto;
  margin-left: 7px;
}

.thumb-obj {
  width: 123px;
  margin-right: auto;
  margin-left: 7px;
}

.thumb-wave {
  width: 195px;
  margin-right: auto;
  margin-left: 6px;
}

/* tabs */
.tabs {
  flex: none;
  display: flex;
  align-items: flex-start;
}

.tab {
  display: flex;
  align-items: center;
  height: 20px;
  margin-top: 1px;
  background: linear-gradient(#f2f2f2, #dedede);
  border: 1px solid #a8a8a8;
  border-top: none;
  white-space: nowrap;
}

.tab svg {
  width: 16px;
  height: 16px;
  flex: none;
}

.tab-active {
  height: 23px;
  margin-top: 0;
  background: #fff;
  align-items: center;
}

.tabs-left {
  height: 24px;
  font-size: 10.400px;
}

.tab-inst {
  width: 77px;
  padding-left: 6px;
  gap: 3px;
}

.tab-mem {
  width: 78px;
  padding-left: 3px;
  gap: 10px;
}

.tab-src {
  width: 71px;
  margin-left: 2px;
  padding-left: 3px;
  gap: 3px;
}

/* objects */
.objpane {
  width: 240px;
  margin-left: 4px;
  flex: none;
  display: flex;
  flex-direction: column;
  padding-top: 2px;
}

.obj-title {
  height: 19px;
  flex: none;
  padding-left: 5px;
  line-height: 19px;
}

.icon-strip-obj {
  height: 23px;
  margin-top: 2px;
  border-top: none;
  border-right: none;
  padding: 0 0 0 2px;
  border-bottom: 1px solid #c8c8c8;
}

.icon-strip-obj .toggle {
  height: 21px;
}

.icon-strip-obj .toggle svg {
  width: 18px;
  height: 18px;
}

.strip-sep {
  width: 1px;
  height: 20px;
  margin-left: 1px;
  background: #bbb;
}

.strip-clock {
  width: 18px;
  height: 18px;
  margin-left: 6px;
}

.obj-box {
  flex: 1;
  min-height: 0;
  margin-top: 4px;
  margin-bottom: 1px;
  display: flex;
  flex-direction: column;
  background: #fff;
  border: 1px solid #a8a8a8;
}

.obj-head {
  height: 25px;
  flex: none;
  display: flex;
  align-items: center;
  padding-top: 2px;
  font-size: 11.800px;
  border-bottom: 1px solid #e2e2e2;
}

.obj-col-name {
  width: 129px;
  padding-left: 11px;
  line-height: 20px;
  border-right: 1px solid #e2e2e2;
}

.obj-col-val {
  padding-left: 7px;
  line-height: 20px;
}

.obj-body {
  flex: 1;
  padding: 0 1px;
  font-size: 11px;
}

.obj-row {
  height: 16px;
  display: flex;
  align-items: center;
  padding-left: 24px;
}

.obj-row svg {
  width: 18px;
  height: 18px;
  flex: none;
}

.obj-name {
  margin-left: 4px;
  width: 85px;
}

.obj-val {
  font-family: "Liberation Mono", monospace;
  font-size: 11.600px;
}

/* waveform side */
.rightpane {
  flex: 1;
  min-width: 0;
  margin-left: 5px;
  display: flex;
  flex-direction: column;
}

.right-top {
  display: flex;
  height: 435px;
  flex: none;
}

.sidebar {
  width: 27px;
  flex: none;
  display: flex;
  flex-direction: column;
  align-items: center;
  padding: 2px 1px 0 0;
  border-right: 2px solid #8c8c8c;
}

.sb {
  width: 22px;
  height: 22px;
  flex: none;
  display: flex;
  align-items: center;
  justify-content: center;
}

.sb svg {
  width: 17px;
  height: 17px;
}

.sb-on {
  background: #d6d6d6;
  border: 1px solid #666;
  border-radius: 4px;
}

.ssep {
  width: 20px;
  height: 6px;
  flex: none;
  background: linear-gradient(#aaa, #aaa) center / 100% 1px no-repeat;
}

.wavepane {
  flex: 1;
  min-width: 0;
  display: flex;
  flex-direction: column;
}

.wavecols {
  height: 417px;
  flex: none;
  display: flex;
}

.col {
  display: flex;
  flex-direction: column;
  background: #000;
  color: #fff;
}

.col-names {
  width: 126px;
  margin-right: 4px;
  font-size: 11px;
}

.col-values {
  width: 81px;
  margin-right: 4px;
}

.col-top {
  height: 34px;
  flex: none;
  border-bottom: 2px solid #8c8c8c;
}

.col-head {
  height: 24px;
  flex: none;
  padding-left: 7px;
  margin: 0 2px;
  color: #111;
  font-size: 11.300px;
  font-weight: bold;
  line-height: 24px;
  background: linear-gradient(#fff, #eee);
  border-bottom: 1px solid #ccc;
}

.col-values .col-head {
  margin-right: 0;
  padding-left: 6px;
  font-size: 11px;
}

.name-row {
  height: 20px;
  flex: none;
  display: flex;
  align-items: center;
  gap: 4px;
  margin: 0 2px 0 22px;
  padding-left: 4px;
  color: #111;
  background: #f0f0f0;
}

.name-row svg {
  width: 18px;
  height: 18px;
}

.val-rows {
  margin-left: 0;
  border-left: 1px solid #ddd;
}

.val-row {
  height: 20px;
  padding-left: 4px;
  font-family: "Liberation Mono", monospace;
  font-size: 11.600px;
  line-height: 20px;
  white-space: nowrap;
}

.col-fill {
  flex: 1;
}

.col-foot {
  height: 40px;
  flex: none;
  border-top: 2px solid #8c8c8c;
}

.wave {
  width: 626px;
  height: 417px;
  flex: none;
  background: #000;
  display: block;
}

.grid path {
  fill: none;
  stroke: #b4b4b4;
  stroke-width: 1;
}

.ticks path {
  fill: none;
  stroke: #e0e0e0;
  stroke-width: 1;
}

.axis-text text {
  font-size: 11px;
  fill: #e8e8e8;
}

.clk {
  fill: #003f00;
  stroke: #35d335;
  stroke-width: 2;
}

.lvl-green {
  stroke: #35d335;
  stroke-width: 2;
}

.lvl-orange {
  stroke: #f4a41e;
  stroke-width: 2;
}

.lvl-brown {
  fill: #4e2f00;
}

.bus {
  fill: #000;
  stroke: #35d335;
  stroke-width: 2;
}

.bus-text {
  font-size: 10.500px;
  fill: #e8e8e8;
  text-anchor: middle;
}

.cursor {
  stroke: #f0f000;
  stroke-width: 2;
}

.cursor-box {
  fill: #000;
  stroke: #e8e830;
}

.cursor-text {
  font-size: 11px;
  fill: #e8e830;
  text-anchor: middle;
}

.x1-text {
  font-size: 11px;
  fill: #e8e8e8;
}

.vscroll-thin {
  width: 20px;
  flex: none;
  display: flex;
  flex-direction: column;
  align-items: center;
  justify-content: space-between;
  padding: 7px 0 6px;
  background: #f2f2f2;
}

.wavescrolls {
  height: 18px;
  flex: none;
  display: flex;
}

.hs-names {
  width: 126px;
  margin-right: 4px;
  padding: 0 6px;
}

.hs-values {
  width: 81px;
  margin-right: 4px;
  padding: 0 5px 0 4px;
}

.hs-wave {
  width: 626px;
  padding: 0 4px 0 7px;
}

.wave-tabs {
  height: 22px;
  flex: none;
  display: flex;
  align-items: stretch;
  padding-left: 2px;
}

.wave-tab-icon {
  width: 23px;
  display: flex;
  align-items: center;
  justify-content: center;
  background: linear-gradient(#f4f4f4, #dedede);
  border: 1px solid #a8a8a8;
  border-bottom: none;
}

.wave-tab-icon svg {
  width: 20px;
  height: 16px;
}

.wave-tab {
  width: 419px;
  display: flex;
  align-items: center;
  padding-right: 7px;
  background: #fff;
  border-right: 1px solid #a8a8a8;
}

.wave-tab-text {
  flex: 1;
  text-align: center;
  padding-left: 6px;
}

.tab-close {
  width: 14px;
  height: 14px;
  display: flex;
  align-items: center;
  justify-content: center;
  color: #fff;
  font-size: 10px;
  font-weight: bold;
  background: #e07050;
  border: 1px solid #b04a30;
  border-radius: 2px;
}

.tab-blue {
  width: 444px;
  height: 2px;
  flex: none;
  background: #3f86cc;
}

/* console */
.sash {
  height: 7px;
  flex: none;
  background: repeating-linear-gradient(90deg, #c4c4c4 0 1px, transparent 1px 3px) 0 1px / 100% 1px no-repeat;
  border-bottom: 1px solid #a8a8a8;
}

.console {
  height: 137px;
  flex: none;
  display: flex;
  flex-direction: column;
}

.console-head {
  height: 18px;
}

.console-box {
  flex: 1;
  min-height: 0;
  margin-top: 1px;
  display: flex;
  background: #fff;
  border-top: 1px solid #a8a8a8;
  border-bottom: 1px solid #a8a8a8;
}

.console-text {
  flex: 1;
  padding-left: 4px;
  overflow: hidden;
}

.clog {
  height: 14px;
  line-height: 14px;
  white-space: nowrap;
}

.clog-cut {
  margin-top: -10px;
}

.vscroll {
  width: 17px;
  flex: none;
  display: flex;
  flex-direction: column;
  align-items: center;
  padding-top: 7px;
  background: #f4f4f4;
}

.vthumb {
  width: 15px;
  height: 66px;
  margin: 16px 0 10px;
  display: flex;
  align-items: center;
  justify-content: center;
  background: linear-gradient(90deg, #f0f0f0, #d0d0d0);
  border: 1px solid #a0a0a0;
  border-radius: 3px;
}

.vgrip {
  width: 7px;
  height: 7px;
  background: repeating-linear-gradient(#666 0 1px, #eee 1px 3px);
}

.tabs-bottom {
  height: 23px;
  font-size: 10.200px;
}

.tab-con {
  width: 77px;
  padding-left: 5px;
  gap: 8px;
}

.tab-log {
  width: 104px;
  margin-left: 2px;
  padding-left: 2px;
  gap: 7px;
}

.tab-brk {
  width: 90px;
  margin-left: 1px;
  padding-left: 4px;
  gap: 8px;
}

.tab-find {
  width: 124px;
  margin-left: 1px;
  padding-left: 4px;
  gap: 8px;
}

.tab-search {
  width: 102px;
  margin-left: 1px;
  padding-left: 4px;
  gap: 8px;
}

.statusbar {
  flex: 1;
  display: flex;
  justify-content: flex-end;
  padding: 4px 2px 3px 0;
}

.simtime {
  width: 146px;
  padding-left: 3px;
  font-family: "Open Sans", sans-serif;
  font-size: 11px;
  line-height: 22px;
  white-space: nowrap;
  border-top: 1px solid #b4b4b4;
  border-left: 1px solid #b4b4b4;
  border-right: 1px solid #b4b4b4;
}
```
